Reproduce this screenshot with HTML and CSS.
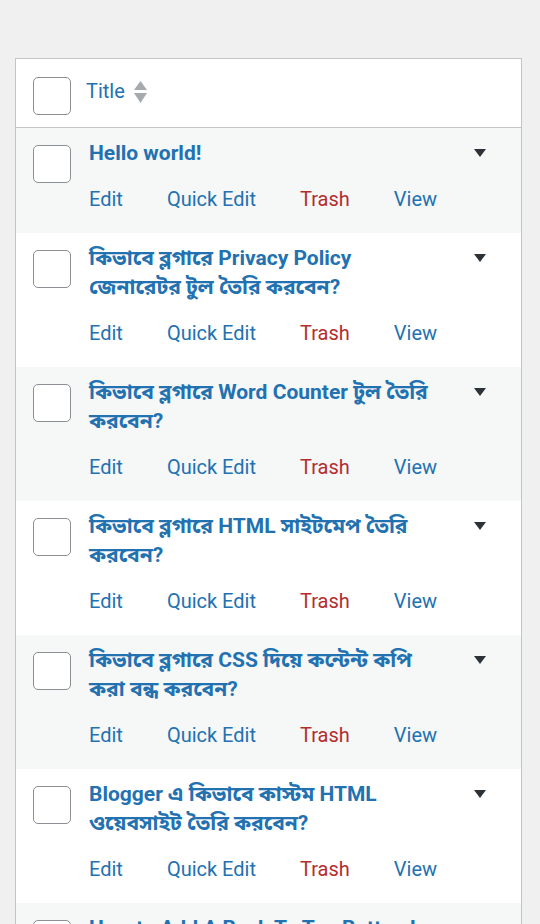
FILE: index.html
```html
<!DOCTYPE html>
<html>
<head>
  <meta charset="utf-8">
  <meta name="viewport" content="width=device-width, initial-scale=1">
  <title>Posts</title>
  <link rel="stylesheet" href="styles.css">
</head>
<body>

  <div class="posts">
    <div class="posts-head">
      <span class="check"></span>
      <a href="#" class="sort-title">Title
        <svg class="sort-icon" width="13" height="22" viewBox="0 0 13 22">
          <polygon points="6.5,0 13,9 0,9" />
          <polygon points="0,12 13,12 6.5,22" />
        </svg>
      </a>
    </div>

    <div class="post-row striped">
      <span class="check"></span>
      <div class="post-body">
        <a href="#" class="post-title">Hello world!</a>
        <div class="row-actions">
          <a href="#">Edit</a><a href="#">Quick Edit</a><a href="#" class="trash">Trash</a><a href="#">View</a>
        </div>
      </div>
      <span class="toggle"></span>
    </div>

    <div class="post-row">
      <span class="check"></span>
      <div class="post-body">
        <a href="#" class="post-title">কিভাবে ব্লগারে Privacy Policy জেনারেটর টুল তৈরি করবেন?</a>
        <div class="row-actions">
          <a href="#">Edit</a><a href="#">Quick Edit</a><a href="#" class="trash">Trash</a><a href="#">View</a>
        </div>
      </div>
      <span class="toggle"></span>
    </div>

    <div class="post-row striped">
      <span class="check"></span>
      <div class="post-body">
        <a href="#" class="post-title">কিভাবে ব্লগারে Word Counter টুল তৈরি করবেন?</a>
        <div class="row-actions">
          <a href="#">Edit</a><a href="#">Quick Edit</a><a href="#" class="trash">Trash</a><a href="#">View</a>
        </div>
      </div>
      <span class="toggle"></span>
    </div>

    <div class="post-row">
      <span class="check"></span>
      <div class="post-body">
        <a href="#" class="post-title">কিভাবে ব্লগারে HTML সাইটমেপ তৈরি করবেন?</a>
        <div class="row-actions">
          <a href="#">Edit</a><a href="#">Quick Edit</a><a href="#" class="trash">Trash</a><a href="#">View</a>
        </div>
      </div>
      <span class="toggle"></span>
    </div>

    <div class="post-row striped">
      <span class="check"></span>
      <div class="post-body">
        <a href="#" class="post-title">কিভাবে ব্লগারে CSS দিয়ে কন্টেন্ট কপি করা বন্ধ করবেন?</a>
        <div class="row-actions">
          <a href="#">Edit</a><a href="#">Quick Edit</a><a href="#" class="trash">Trash</a><a href="#">View</a>
        </div>
      </div>
      <span class="toggle"></span>
    </div>

    <div class="post-row">
      <span class="check"></span>
      <div class="post-body">
        <a href="#" class="post-title">Blogger এ কিভাবে কাস্টম HTML ওয়েবসাইট তৈরি করবেন?</a>
        <div class="row-actions">
          <a href="#">Edit</a><a href="#">Quick Edit</a><a href="#" class="trash">Trash</a><a href="#">View</a>
        </div>
      </div>
      <span class="toggle"></span>
    </div>

    <div class="post-row striped">
      <span class="check"></span>
      <div class="post-body">
        <a href="#" class="post-title">How to Add A Back To Top Button In Blogger?</a>
        <div class="row-actions">
          <a href="#">Edit</a><a href="#">Quick Edit</a><a href="#" class="trash">Trash</a><a href="#">View</a>
        </div>
      </div>
      <span class="toggle"></span>
    </div>
  </div>

</body>
</html>
```

FILE: styles.css
```css
/* General Styling */
body {
  font-family: Roboto, "Noto Sans Bengali", "Noto Sans", sans-serif;
  margin: 0;
  padding: 58px 18px 0 15px;
  background-color: #f0f0f1;
  color: #3c434a;
}

a {
  color: #2271b1;
  text-decoration: none;
}

.posts {
  background: white;
  border: 1px solid #c3c4c7;
}

/* Header row */
.posts-head {
  display: flex;
  align-items: flex-start;
  height: 69px;
  padding: 18px 0 0 17px;
  box-sizing: border-box;
  border-bottom: 1px solid #c3c4c7;
}

.sort-title {
  display: flex;
  align-items: center;
  margin-left: 15px;
  font-size: 20px;
  line-height: 29px;
}

.sort-icon {
  margin-left: 9px;
  fill: #a7aaad;
}

.check {
  display: block;
  flex: none;
  width: 36px;
  height: 36px;
  border: 1px solid #8c8f94;
  border-radius: 5px;
  background: white;
}

/* Post rows */
.post-row {
  display: flex;
  align-items: flex-start;
  padding: 11px 0 19px 17px;
}

.post-row .check {
  margin-top: 6px;
}

.striped {
  background-color: #f6f7f7;
}

.post-body {
  flex: 1;
  min-width: 0;
  margin-left: 18px;
  padding-right: 26px;
}

.post-title {
  display: block;
  font-size: 21px;
  font-weight: 700;
  line-height: 29px;
}

.row-actions {
  display: flex;
  margin-top: 17px;
  font-size: 20px;
  line-height: 29px;
  white-space: nowrap;
}

.row-actions a {
  margin-right: 44px;
}

.row-actions a:last-child {
  margin-right: 0;
}

.row-actions .trash {
  color: #b32d2e;
}

.toggle {
  flex: none;
  width: 0;
  height: 0;
  margin: 10px 35px 0 0;
  border-left: 6px solid transparent;
  border-right: 6px solid transparent;
  border-top: 8px solid #2c3338;
}
```
